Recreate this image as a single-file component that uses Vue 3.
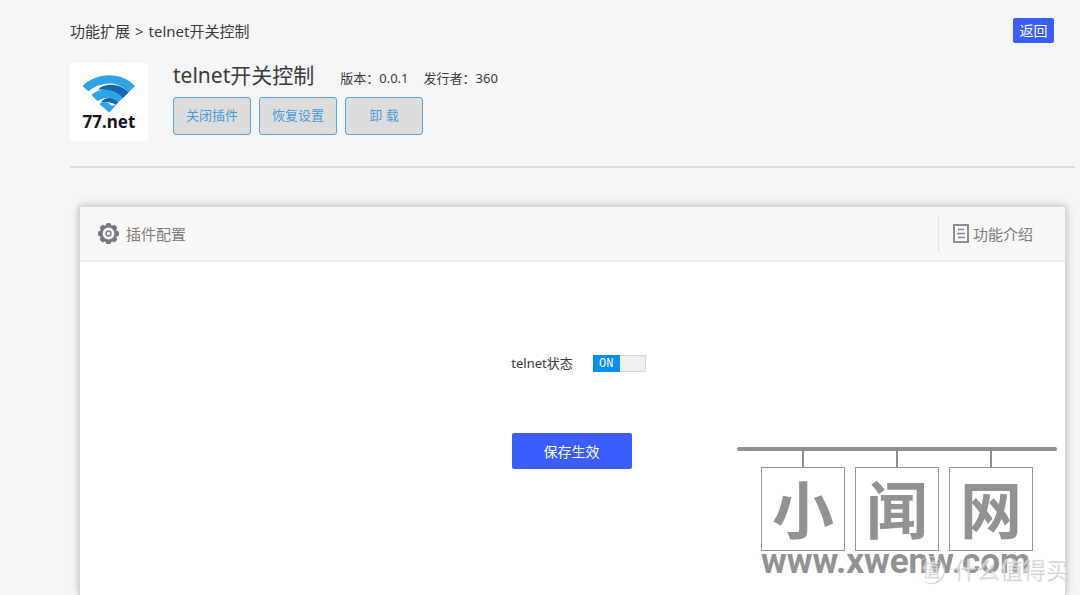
<script setup>
import { ref } from 'vue'

const enabled = ref(true)
const actions = ['关闭插件', '恢复设置', '卸 载']
const signs = ['小', '闻', '网']
const teeth = [0, 45, 90, 135, 180, 225, 270, 315]
</script>

<template>
  <div class="page">
    <header class="top">
      <nav class="crumbs">
        <a href="#">功能扩展</a><span class="sep">&gt;</span><span>telnet开关控制</span>
      </nav>
      <button type="button" class="back">返回</button>
    </header>

    <section class="plugin">
      <svg class="logo" viewBox="0 0 78 78" role="img" aria-label="77.net">
        <rect width="78" height="78" fill="#fff" />
        <path d="M12.500 23C27 8.500 52 8.500 65 23L58.500 29.500C55 25 49 21.500 42 20.500C33 20 24 23 18.500 28.500Z" fill="#2ba5e4" />
        <path d="M28 26.500C34 20 50 19.500 58.500 29.500L52.500 35.500C46 29 38 26 28 26.500Z" fill="#1766b1" />
        <path d="M21.500 32C29 24.500 44 24.500 53 35L48.500 39C42 33 34 34 27.500 38Z" fill="#2ba5e4" />
        <path d="M31 39.500C34 34 43 33.500 48.500 39L46 42C41 39 36 38.500 31 39.500Z" fill="#1766b1" />
        <path d="M29.500 41C33 38 38 38.500 41 42.500L46 42.500L39 49.500Z" fill="#2ba5e4" />
        <text x="39" y="65" text-anchor="middle" class="logo-text">77.net</text>
      </svg>
      <div class="info">
        <div class="heading">
          <h1>telnet开关控制</h1>
          <span class="version">版本：0.0.1</span>
          <span>发行者：360</span>
        </div>
        <div class="actions">
          <button v-for="a in actions" :key="a" type="button">{{ a }}</button>
        </div>
      </div>
    </section>

    <main class="panel">
      <div class="tabs">
        <a href="#" class="tab">
          <svg class="gear" viewBox="0 0 20 20" aria-hidden="true">
            <rect v-for="t in teeth" :key="t" x="7.500" y="0" width="5" height="5" rx="1.500" :transform="`rotate(${t} 10 10)`" fill="#77777f" />
            <circle cx="10" cy="10" r="7" fill="#fbfaf9" stroke="#77777f" stroke-width="2.800" />
            <circle cx="10" cy="10" r="2.300" fill="none" stroke="#85858c" stroke-width="1.500" />
          </svg>
          <span>插件配置</span>
        </a>
        <a href="#" class="tab intro">
          <svg class="doc" viewBox="0 0 16 19" aria-hidden="true">
            <rect x="1" y="1" width="14" height="17" fill="#fbfaf9" stroke="#8b8d94" stroke-width="2" />
            <path d="M5 5.500H11M4 9.500H12M5 13.500H12" stroke="#858790" stroke-width="1.500" />
          </svg>
          <span>功能介绍</span>
        </a>
      </div>
      <form class="config" @submit.prevent>
        <div class="row">
          <label for="telnet">telnet状态</label>
          <span class="switch" :class="{ off: !enabled }">
            <input id="telnet" v-model="enabled" type="checkbox" role="switch" />
            <span class="knob" aria-hidden="true">{{ enabled ? 'ON' : 'OFF' }}</span>
          </span>
        </div>
        <button type="submit" class="save">保存生效</button>
      </form>
    </main>

    <div class="sign">
      <div class="bar"></div>
      <div class="boards">
        <span v-for="s in signs" :key="s" class="board">{{ s }}</span>
      </div>
      <div class="site">www.xwenw.com</div>
    </div>
    <div class="stamp"><span class="seal">值</span><span>什么值得买</span></div>
  </div>
</template>

<style>
body {
  background: #f4f6f8;
}
</style>

<style scoped>
.page {
  position: relative;
  box-sizing: border-box;
  display: flex;
  flex-direction: column;
  min-height: 100vh;
  padding: 18px 5px 0 70px;
  overflow: hidden;
  color: #3a3a3a;
  font-family: "Noto Sans", "Noto Sans CJK SC", sans-serif;
  font-size: 13px;
}
button {
  font: inherit;
  cursor: pointer;
}
a {
  color: inherit;
  text-decoration: none;
}
.top {
  display: flex;
  align-items: center;
  justify-content: space-between;
  padding-right: 21px;
}
.crumbs {
  font-size: 15px;
  line-height: 24px;
}
.sep {
  margin: 0 5px;
}
.back {
  width: 41px;
  height: 25px;
  padding: 0;
  border: 0;
  border-radius: 2px;
  background: #3a5dff;
  color: #fff;
  font-size: 14px;
  line-height: 24px;
}
.plugin {
  display: flex;
  gap: 25px;
  padding: 20px 0 25px;
  border-bottom: 2px solid #d9dbdd;
}
.logo {
  width: 78px;
  height: 78px;
}
.logo-text {
  font: bold 17px "Noto Sans", sans-serif;
  fill: #17161b;
}
.heading {
  display: flex;
  align-items: center;
  height: 24px;
  margin-bottom: 10px;
}
h1 {
  margin: 0;
  font-size: 21px;
  font-weight: inherit;
  line-height: 24px;
}
.heading span {
  padding-top: 4px;
}
.heading .version {
  margin: 0 15px 0 26px;
}
.actions {
  display: flex;
  gap: 8px;
}
.actions button {
  width: 78px;
  height: 38px;
  padding: 0 0 3px;
  border: 1px solid #56a7e0;
  border-radius: 3px;
  background: #dddddd;
  color: #459bda;
}
.panel {
  flex: 1;
  margin: 38px 9px 0;
  border: 1px solid #d5d6d8;
  border-bottom: 0;
  background: #fff;
  box-shadow: 0 0 8px rgba(0, 0, 0, 0.28);
}
.tabs {
  display: flex;
  align-items: center;
  justify-content: space-between;
  height: 53px;
  padding: 0 32px 0 18px;
  border-bottom: 2px solid #ebebeb;
  background: #f9f8f7;
}
.tab {
  display: flex;
  align-items: center;
  gap: 7px;
  color: #7c7a77;
  font-size: 15px;
  line-height: 20px;
}
.gear {
  width: 21px;
  height: 21px;
}
.intro {
  gap: 4px;
  height: 38px;
  padding-left: 14px;
  border-left: 1px solid #e5e4e3;
}
.doc {
  width: 16px;
  height: 19px;
}
.config {
  display: flex;
  flex-direction: column;
  align-items: center;
  padding: 90px 2px 100px 0;
}
.row {
  display: flex;
  align-items: center;
  gap: 20px;
  height: 22px;
  margin: 0 0 59px 14px;
}
.row label {
  line-height: 18px;
}
.switch {
  display: flex;
  position: relative;
  box-sizing: border-box;
  width: 53px;
  height: 17px;
  border: 1px solid #d2d5d6;
  background: #eff1f1;
}
.switch input {
  position: absolute;
  inset: 0;
  width: 100%;
  height: 100%;
  margin: 0;
  opacity: 0;
  cursor: pointer;
}
.knob {
  width: 27px;
  height: 17px;
  margin: -1px;
  background: #0a8df2;
  color: #fff;
  font: 12px/18px "Liberation Mono", monospace;
  text-align: center;
}
.off .knob {
  margin-left: auto;
  background: #999;
}
.save {
  width: 120px;
  height: 36px;
  padding: 0;
  border: 0;
  border-radius: 2px;
  background: #3a5dff;
  color: #fff;
  font-size: 14px;
}
.sign {
  position: absolute;
  top: 447px;
  right: 23px;
  width: 320px;
  color: #929292;
  pointer-events: none;
}
.bar {
  height: 4px;
  border-radius: 2px;
  background: #8d8d93;
}
.boards {
  display: flex;
  gap: 10px;
  padding: 16px 24px 0;
}
.board {
  position: relative;
  width: 82px;
  height: 82px;
  border: 1px solid #8c969f;
  font: bold 62px/78px "Noto Sans CJK SC", sans-serif;
  text-align: center;
}
.board::before {
  content: "";
  position: absolute;
  top: -17px;
  left: 40px;
  width: 2px;
  height: 16px;
  background: #8d8d93;
}
.site {
  padding-left: 24px;
  font: bold 35px/38px Roboto, sans-serif;
  margin-top: -8px;
}
.stamp {
  position: absolute;
  top: 554px;
  right: 12px;
  display: flex;
  align-items: center;
  gap: 9px;
  color: rgba(255, 255, 255, 0.45);
  font-size: 23px;
  line-height: 30px;
  text-shadow: 1px 1px 1px #c8c8c8;
  pointer-events: none;
}
.seal {
  width: 25px;
  height: 25px;
  border: 1px solid rgba(255, 255, 255, 0.5);
  border-radius: 50%;
  box-shadow: 1px 1px 1px #ccc;
  font-size: 18px;
  line-height: 25px;
  text-align: center;
}
</style>
